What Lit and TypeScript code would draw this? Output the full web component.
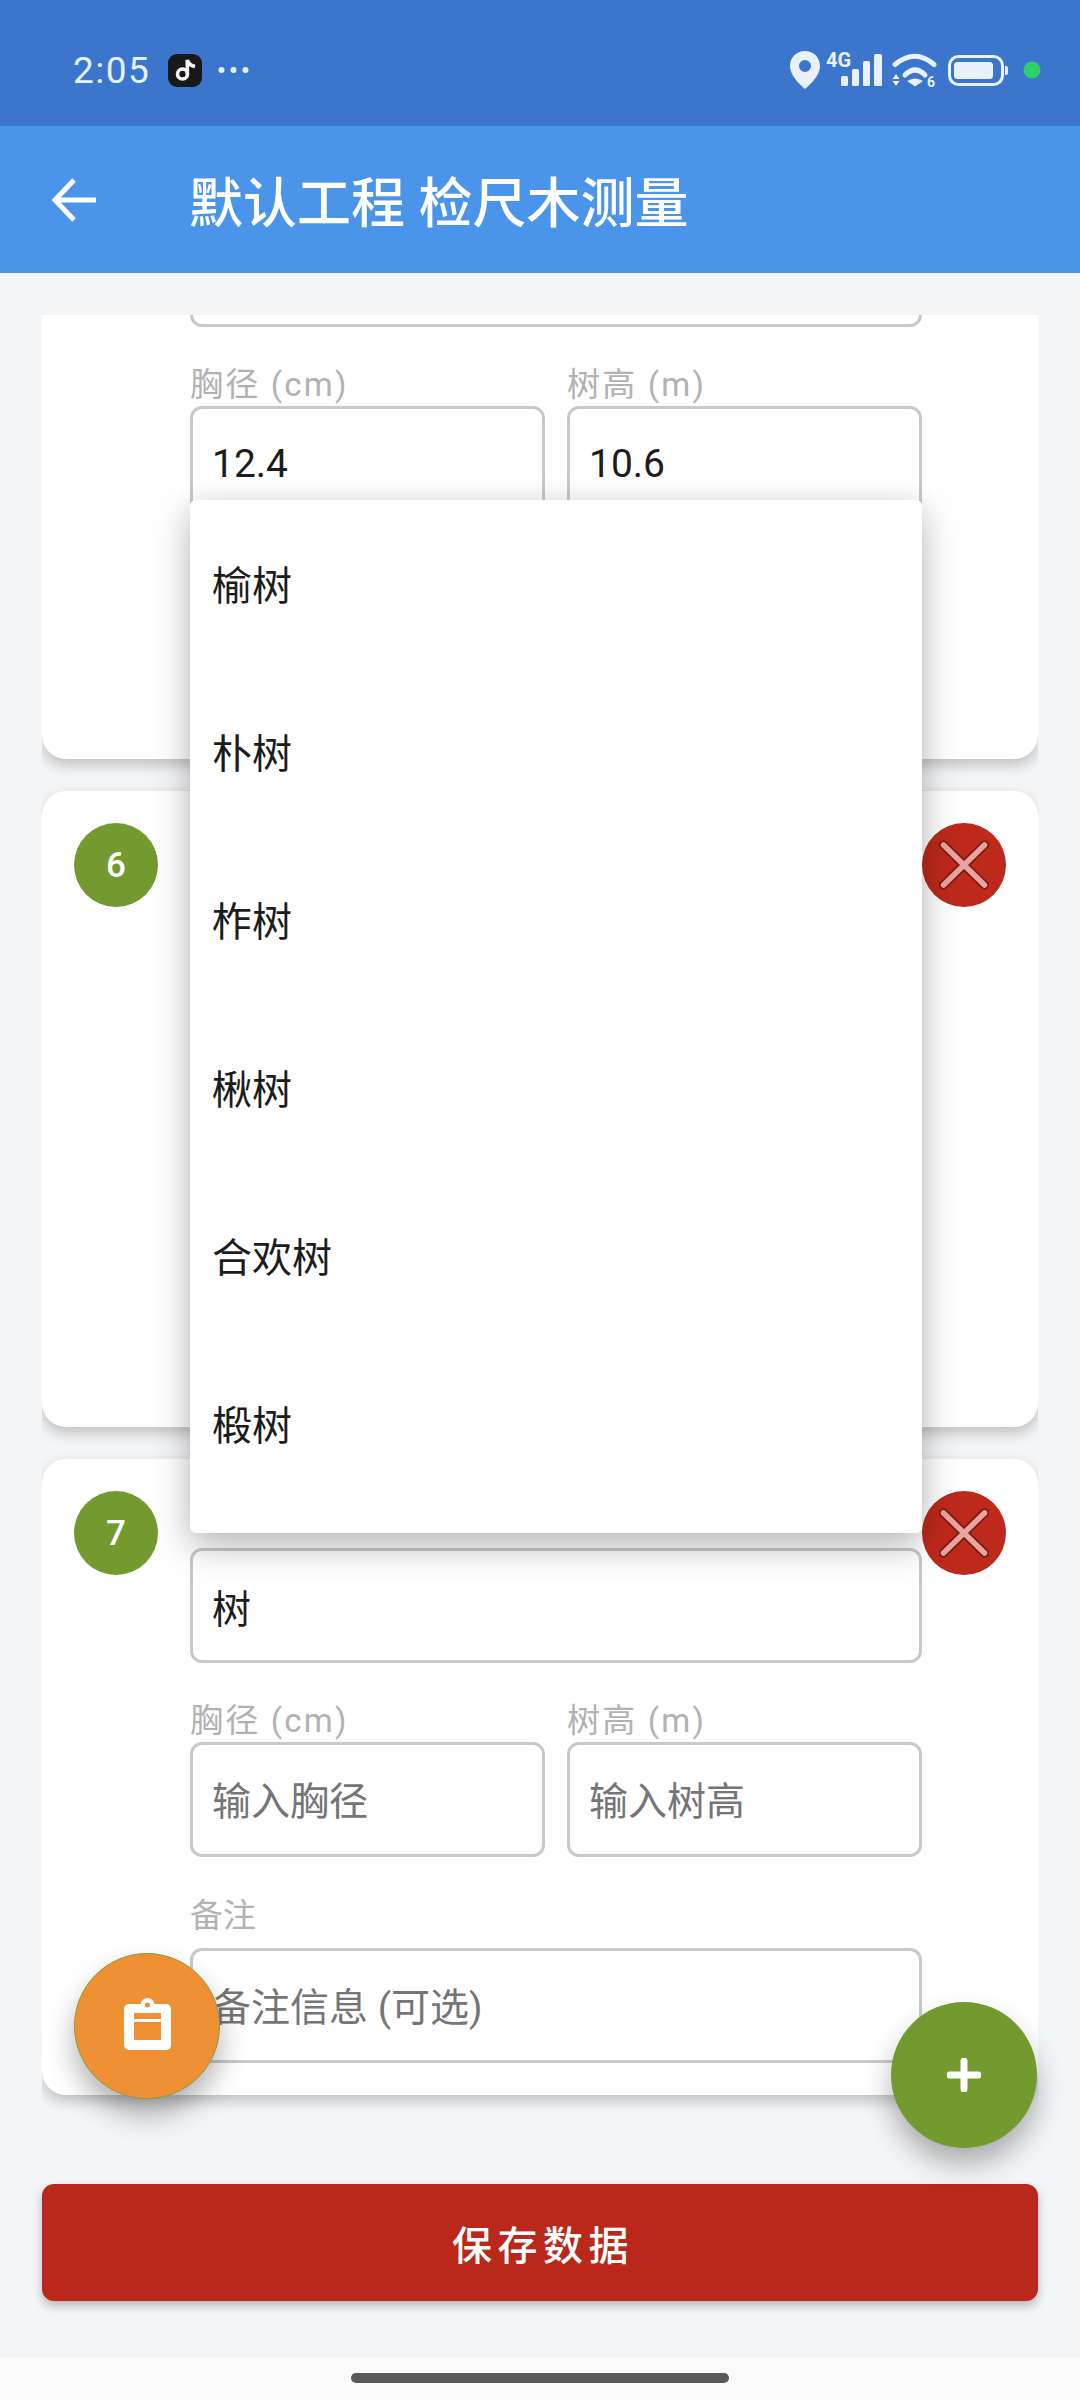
import { LitElement, html, css, nothing } from 'lit';
import { customElement, property } from 'lit/decorators.js';

interface TreeRecord {
  no: number | null;
  species: string;
  dbh: string;
  dbhPlaceholder: string;
  dbhLabel: string;
  height: string;
  heightPlaceholder: string;
  heightLabel: string;
  noteLabel: string;
  notePlaceholder: string;
}

// Only what the open dropdown and the scroll position leave visible carries text
const RECORDS: TreeRecord[] = [
  {
    no: null, species: '', dbh: '12.4', dbhPlaceholder: '', dbhLabel: '胸径 (cm)',
    height: '10.6', heightPlaceholder: '', heightLabel: '树高 (m)', noteLabel: '', notePlaceholder: '',
  },
  {
    no: 6, species: '', dbh: '', dbhPlaceholder: '', dbhLabel: '',
    height: '', heightPlaceholder: '', heightLabel: '', noteLabel: '', notePlaceholder: '',
  },
  {
    no: 7, species: '树', dbh: '', dbhPlaceholder: '输入胸径', dbhLabel: '胸径 (cm)',
    height: '', heightPlaceholder: '输入树高', heightLabel: '树高 (m)', noteLabel: '备注', notePlaceholder: '备注信息 (可选)',
  },
];

const SPECIES_OPTIONS = ['榆树', '朴树', '柞树', '楸树', '合欢树', '椴树'];

@customElement('tree-card')
export class TreeCard extends LitElement {
  static override styles = css`
    :host {
      display: block;
    }

    .card {
      display: flex;
      padding: 32px;
      background: #fff;
      border-radius: 24px;
      box-shadow: 0 6px 14px rgba(0, 0, 0, 0.22);
    }

    .badge,
    .remove {
      flex: none;
      width: 84px;
      height: 84px;
      border-radius: 50%;
      display: flex;
      align-items: center;
      justify-content: center;
    }

    .badge {
      background: #739a2e;
      color: #fff;
      font: 500 35px Roboto, 'Noto Sans', sans-serif;
    }

    .remove {
      background: #bd291b;
    }

    .fields {
      flex: 1;
      margin-left: 32px;
      display: flex;
      flex-direction: column;
      gap: 30px;
    }

    .row {
      display: flex;
      gap: 22px;
    }

    .field {
      flex: 1;
      min-width: 0;
    }

    .label {
      height: 49px;
      line-height: 56px;
      font-size: 33px;
      color: #b2b2b2;
      letter-spacing: 2.2px;
      font-family: Roboto, 'Noto Sans CJK SC', sans-serif;
      white-space: nowrap;
    }

    .label.species {
      height: 57px;
    }

    .label.note {
      height: 61px;
      line-height: 58px;
      letter-spacing: 0;
    }

    .input {
      box-sizing: border-box;
      height: 115px;
      padding: 0 19px;
      border: 3px solid #c9c9c9;
      border-radius: 12px;
      display: flex;
      align-items: center;
      font-size: 39px;
      color: #1c1c1c;
      font-family: Roboto, 'Noto Sans CJK SC', sans-serif;
      white-space: nowrap;
    }

    .input.placeholder {
      color: #757575;
      padding-bottom: 3px;
    }
  `;

  @property({ type: Object })
  record!: TreeRecord;

  private renderInput(value: string, placeholder: string) {
    return html`<div class="input ${value ? '' : 'placeholder'}">${value || placeholder || nothing}</div>`;
  }

  override render() {
    const r = this.record;
    return html`
      <div class="card">
        <div class="badge">${r.no ?? nothing}</div>
        <div class="fields">
          <div class="field">
            <div class="label species"></div>
            ${this.renderInput(r.species, '')}
          </div>
          <div class="row">
            <div class="field">
              <div class="label">${r.dbhLabel}</div>
              ${this.renderInput(r.dbh, r.dbhPlaceholder)}
            </div>
            <div class="field">
              <div class="label">${r.heightLabel}</div>
              ${this.renderInput(r.height, r.heightPlaceholder)}
            </div>
          </div>
          <div class="field">
            <div class="label note">${r.noteLabel}</div>
            ${this.renderInput('', r.notePlaceholder)}
          </div>
        </div>
        <div class="remove">
          <svg width="60" height="60" viewBox="0 0 60 60" fill="none">
            <path d="M9.500 10 L50.500 50 M50.500 10 L9.500 50" stroke="#7c1a12" stroke-width="9" stroke-linecap="round" />
            <path d="M9.500 10 L50.500 50 M50.500 10 L9.500 50" stroke="#e9a3a0" stroke-width="5.500" stroke-linecap="round" />
          </svg>
        </div>
      </div>
    `;
  }
}

@customElement('app-root')
export class AppRoot extends LitElement {
  static override styles = css`
    :host {
      display: block;
      width: 1080px;
      height: 2400px;
      position: relative;
      overflow: hidden;
      background: #f4f5f7;
      font-family: Roboto, 'Noto Sans CJK SC', sans-serif;
    }

    .screen {
      height: 100%;
      display: flex;
      flex-direction: column;
    }

    .status {
      flex: none;
      box-sizing: border-box;
      height: 126px;
      padding: 14px 35px 0 73px;
      background: #3b76cc;
      color: #e6f1ff;
      display: flex;
      align-items: center;
    }

    .time {
      font-size: 37px;
      line-height: 1;
      letter-spacing: 1.500px;
    }

    .tiktok {
      margin-left: 18px;
      display: block;
    }

    .more {
      margin-left: 16px;
      display: block;
    }

    .status-right {
      margin-left: auto;
      display: block;
    }

    .appbar {
      flex: none;
      height: 147px;
      background: #4a94ea;
      color: #fff;
      display: flex;
      align-items: center;
    }

    .back {
      margin-left: 51px;
      display: block;
    }

    .title {
      margin-left: 90px;
      font-size: 54px;
      font-weight: 500;
      font-family: Roboto, 'Noto Sans CJK SC', sans-serif;
    }

    .main {
      flex: 1;
      min-height: 0;
      padding: 42px 42px 0;
      display: flex;
      flex-direction: column;
    }

    .viewport {
      height: 1845px;
      overflow: hidden;
    }

    .list {
      margin-top: -192px;
      display: flex;
      flex-direction: column;
      gap: 32px;
    }

    .save {
      margin-top: 24px;
      height: 117px;
      flex: none;
      box-sizing: border-box;
      padding-left: 6px;
      border-radius: 12px;
      background: #b9281a;
      box-shadow: 0 5px 10px rgba(0, 0, 0, 0.25);
      color: #fff;
      display: flex;
      align-items: center;
      justify-content: center;
      font-size: 40px;
      font-weight: 500;
      letter-spacing: 5.500px;
    }

    .navbar {
      flex: none;
      height: 43px;
      background: #fbfbfb;
      display: flex;
      justify-content: center;
      padding-top: 16px;
      box-sizing: border-box;
    }

    .home {
      width: 378px;
      height: 10px;
      border-radius: 5px;
      background: #5a5a5a;
    }

    .menu {
      position: absolute;
      left: 190px;
      top: 500px;
      width: 732px;
      height: 1033px;
      background: #fff;
      border-radius: 6px;
      box-shadow: 0 14px 38px rgba(0, 0, 0, 0.26), 0 0 24px rgba(0, 0, 0, 0.06);
    }

    .option {
      box-sizing: border-box;
      height: 168px;
      padding: 0 0 2px 22px;
      display: flex;
      align-items: center;
      font-size: 40px;
      color: #1c1c1c;
    }

    .fab {
      position: absolute;
      width: 146px;
      height: 146px;
      border-radius: 50%;
      display: flex;
      align-items: center;
      justify-content: center;
      box-shadow: 0 16px 28px rgba(0, 0, 0, 0.3);
    }

    .fab.clipboard {
      left: 74px;
      top: 1953px;
      box-sizing: border-box;
      background: #f09035;
      border: 1px solid #8f9a3c;
      padding-bottom: 4px;
    }

    .fab.add {
      left: 891px;
      top: 2002px;
      background: #739a2e;
    }
  `;

  override render() {
    return html`
      <div class="screen">
        <div class="status">
          <span class="time">2:05</span>
          <svg class="tiktok" width="34" height="33" viewBox="0 0 34 33" fill="none">
            <rect width="34" height="33" rx="9" fill="#18181a" />
            <circle cx="14.500" cy="20" r="5" stroke="#fdf3f4" stroke-width="3.600" />
            <path d="M19.300 20 V6 Q20.500 11 27 12.500" stroke="#fdf3f4" stroke-width="3.600" />
          </svg>
          <svg class="more" width="31" height="8" viewBox="0 0 31 8" fill="#e6f1ff">
            <circle cx="3.500" cy="4" r="3" />
            <circle cx="15.500" cy="4" r="3" />
            <circle cx="27.500" cy="4" r="3" />
          </svg>
          <svg class="status-right" width="260" height="48" viewBox="785 45 260 48" fill="#e9f1fd">
            <path fill-rule="evenodd" d="M805 50 C796.500 50 790 56.500 790 65 C790 74 799 83 805 88 C811 83 820 74 820 65 C820 56.500 813.500 50 805 50 Z M805 59 A6 6 0 1 1 805 71 A6 6 0 1 1 805 59 Z" />
            <text x="826" y="66" font-family="Roboto, sans-serif" font-weight="700" font-size="20">4G</text>
            <rect x="841" y="75" width="7" height="10" rx="1.500" />
            <rect x="852" y="68" width="7" height="17" rx="1.500" />
            <rect x="863" y="60" width="7" height="25" rx="1.500" />
            <rect x="874" y="53" width="8" height="32" rx="1.500" />
            <path d="M895 63.500 Q915 47 934 63.500" fill="none" stroke="#e9f1fd" stroke-width="5" stroke-linecap="round" />
            <path d="M905 74 Q915 64 925 74" fill="none" stroke="#e9f1fd" stroke-width="5" stroke-linecap="round" />
            <path d="M907 80 Q915 75 923 80 L915 85.500 Z" />
            <path d="M896 73 L899.500 78 H892.500 Z M892.500 80 H899.500 L896 85 Z" />
            <text x="927" y="85.500" font-family="Roboto, sans-serif" font-weight="700" font-size="14">6</text>
            <rect x="949.500" y="55.500" width="53" height="28" rx="9" fill="none" stroke="#e9f1fd" stroke-width="3" />
            <rect x="954" y="61" width="39" height="17" rx="3.500" />
            <path d="M1005 65 H1006 Q1008 65 1008 67 V72 Q1008 74 1006 74 H1005 Z" />
            <circle cx="1032" cy="69" r="8.500" fill="#2fcf68" />
          </svg>
        </div>
        <div class="appbar">
          <svg class="back" width="48" height="46" viewBox="0 0 48 46" fill="none">
            <path d="M45 23 H5 M23 3 L4 23 L23 43" stroke="#fff" stroke-width="5" />
          </svg>
          <span class="title">默认工程 检尺木测量</span>
        </div>
        <div class="main">
          <div class="viewport">
            <div class="list">
              ${RECORDS.map((r) => html`<tree-card .record=${r}></tree-card>`)}
            </div>
          </div>
          <div class="save">保存数据</div>
        </div>
        <div class="navbar"><div class="home"></div></div>
      </div>

      <div class="menu">
        ${SPECIES_OPTIONS.map((name) => html`<div class="option">${name}</div>`)}
      </div>

      <div class="fab clipboard">
        <svg width="47" height="52" viewBox="0 0 47 52">
          <circle cx="23.500" cy="7" r="7" fill="#fff" />
          <rect y="6" width="47" height="46" rx="5" fill="#fff" />
          <circle cx="23.500" cy="7" r="2.500" fill="#f09035" />
          <rect x="10" y="15" width="27" height="6" fill="#f09035" />
          <rect x="10" y="24" width="27" height="18" fill="#f09035" />
        </svg>
      </div>
      <div class="fab add">
        <svg width="34" height="34" viewBox="0 0 34 34">
          <path d="M17 3 V31 M3 17 H31" stroke="#fff" stroke-width="7" stroke-linecap="round" />
        </svg>
      </div>
    `;
  }
}
